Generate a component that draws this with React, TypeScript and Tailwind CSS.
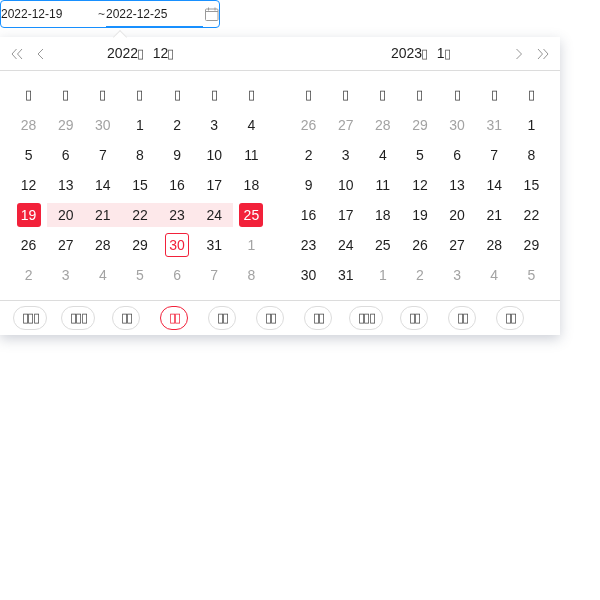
import React from "react";

const weekdays = [0, 1, 2, 3, 4, 5, 6];

type Cell = { d: number; muted?: boolean; kind?: "start" | "range" | "end" | "today" };

const left: Cell[] = [
  { d: 28, muted: true }, { d: 29, muted: true }, { d: 30, muted: true }, { d: 1 }, { d: 2 }, { d: 3 }, { d: 4 },
  { d: 5 }, { d: 6 }, { d: 7 }, { d: 8 }, { d: 9 }, { d: 10 }, { d: 11 },
  { d: 12 }, { d: 13 }, { d: 14 }, { d: 15 }, { d: 16 }, { d: 17 }, { d: 18 },
  { d: 19, kind: "start" }, { d: 20, kind: "range" }, { d: 21, kind: "range" }, { d: 22, kind: "range" }, { d: 23, kind: "range" }, { d: 24, kind: "range" }, { d: 25, kind: "end" },
  { d: 26 }, { d: 27 }, { d: 28 }, { d: 29 }, { d: 30, kind: "today" }, { d: 31 }, { d: 1, muted: true },
  { d: 2, muted: true }, { d: 3, muted: true }, { d: 4, muted: true }, { d: 5, muted: true }, { d: 6, muted: true }, { d: 7, muted: true }, { d: 8, muted: true },
];

const right: Cell[] = [
  { d: 26, muted: true }, { d: 27, muted: true }, { d: 28, muted: true }, { d: 29, muted: true }, { d: 30, muted: true }, { d: 31, muted: true }, { d: 1 },
  { d: 2 }, { d: 3 }, { d: 4 }, { d: 5 }, { d: 6 }, { d: 7 }, { d: 8 },
  { d: 9 }, { d: 10 }, { d: 11 }, { d: 12 }, { d: 13 }, { d: 14 }, { d: 15 },
  { d: 16 }, { d: 17 }, { d: 18 }, { d: 19 }, { d: 20 }, { d: 21 }, { d: 22 },
  { d: 23 }, { d: 24 }, { d: 25 }, { d: 26 }, { d: 27 }, { d: 28 }, { d: 29 },
  { d: 30 }, { d: 31 }, { d: 1, muted: true }, { d: 2, muted: true }, { d: 3, muted: true }, { d: 4, muted: true }, { d: 5, muted: true },
];

const presets = ["▯▯▯", "▯▯▯", "▯▯", "▯▯", "▯▯", "▯▯", "▯▯", "▯▯▯", "▯▯", "▯▯", "▯▯"];

function Day({ cell }: { cell: Cell }) {
  const wrap = cell.kind === "range" ? "bg-[#fde8ea]" : "";
  let inner = cell.muted ? "text-[#a3a3a3]" : "text-[#1f1f1f]";
  if (cell.kind === "start" || cell.kind === "end") inner = "bg-[#f2213a] text-white";
  if (cell.kind === "today") inner = "border border-[#f2213a] text-[#f2213a]";
  return (
    <div className={`flex h-6 items-center justify-center ${wrap}`}>
      <div className={`flex h-6 w-6 items-center justify-center rounded-[3px] ${inner}`}>{cell.d}</div>
    </div>
  );
}

function Month({ cells }: { cells: Cell[] }) {
  return (
    <div className="w-[280px] px-[10px] pt-[12px]">
      <div className="grid grid-cols-7 gap-y-[6px] text-[14px] leading-6">
        {weekdays.map((w) => (
          <div key={w} className="flex h-6 items-center justify-center text-[13px] text-[#3a3a3a]">▯</div>
        ))}
        {cells.map((c, i) => (
          <Day key={i} cell={c} />
        ))}
      </div>
    </div>
  );
}

const Chevron = ({ dir, double }: { dir: "l" | "r"; double?: boolean }) => (
  <svg width="12" height="12" viewBox="0 0 12 12" fill="none" stroke="#969696" strokeWidth="1">
    {dir === "l" ? (
      double ? (
        <>
          <path d="M5.5 1 1 6l4.5 5" />
          <path d="M11 1 6.5 6l4.5 5" />
        </>
      ) : (
        <path d="M7 1 2 6l5 5" />
      )
    ) : double ? (
      <>
        <path d="M1 1l4.5 5L1 11" />
        <path d="M6.5 1 11 6l-4.5 5" />
      </>
    ) : (
      <path d="M2.5 1l5 5-5 5" />
    )}
  </svg>
);

function Title({ year, month }: { year: string; month: string }) {
  return (
    <div className="flex gap-[11px]">
      <span>{year}<span className="-ml-px text-[13px] tracking-[-2.4px] text-[#555555]">▯</span></span>
      <span>{month}<span className="-ml-px text-[13px] tracking-[-2.4px] text-[#555555]">▯</span></span>
    </div>
  );
}

export default function App() {
  return (
    <div className="h-[600px] w-[600px] text-[14px] font-['Liberation_Sans',sans-serif] will-change-[opacity]">
      <div className="flex h-[28px] w-[220px] items-stretch rounded border border-[#1890ff] text-[12px] text-[#1f1f1f]">
        <div className="flex w-[97px] items-center">2022-12-19</div>
        <div className="flex w-[8px] items-center text-[#4a4a4a]">~</div>
        <div className="flex w-[97px] items-center border-y border-t-transparent border-b-[#1890ff]">2022-12-25</div>
        <div className="flex flex-1 items-center pl-[2px]">
          <svg width="14" height="14" viewBox="0 0 14 14" fill="none" stroke="#9a9a9a" strokeWidth="1">
            <rect x="0.5" y="2" width="12.5" height="11.5" rx="1" />
            <path d="M0.5 4.5h12.5M3.5 0.5v3M10 0.5v3" />
          </svg>
        </div>
      </div>

      <div className="relative mt-[9px] w-[560px] bg-white shadow-[0_4px_12px_rgba(60,70,100,0.25)]">
        <div className="absolute left-[115px] top-[-5px] h-[10px] w-[10px] rotate-45 border-l border-t border-[#e6e6e6] bg-white" />
        <div className="relative flex h-[34px] items-center border-b border-[#dcdcdc] text-[14px] text-[#1f1f1f]">
          <div className="flex w-[280px] items-center">
            <div className="ml-[11px] flex"><Chevron dir="l" double /></div>
            <div className="ml-[13px] flex"><Chevron dir="l" /></div>
            <div className="ml-[59px]"><Title year="2022" month="12" /></div>
          </div>
          <div className="flex w-[280px] items-center">
            <div className="ml-[111px]"><Title year="2023" month="1" /></div>
            <div className="ml-auto flex"><Chevron dir="r" /></div>
            <div className="ml-[11px] mr-[11px] flex"><Chevron dir="r" double /></div>
          </div>
        </div>
        <div className="flex h-[229px]">
          <Month cells={left} />
          <Month cells={right} />
        </div>
        <div className="flex h-[35px] items-center border-t border-[#dcdcdc] pl-[6px]">
          {presets.map((label, i) => {
            const active = i === 3;
            return (
              <div key={i} className="flex w-[48px] justify-center">
                <div
                  className={`flex h-[24px] items-center justify-center rounded-full border text-[13px] tracking-[-1.9px] ${
                    label.length === 3 ? "w-[34px]" : "w-[28px]"
                  } ${active ? "border-[#f2213a] text-[#f2213a]" : "border-[#dcdcdc] text-[#4a4a4a]"}`}
                >
                  {label}
                </div>
              </div>
            );
          })}
        </div>
      </div>
    </div>
  );
}
